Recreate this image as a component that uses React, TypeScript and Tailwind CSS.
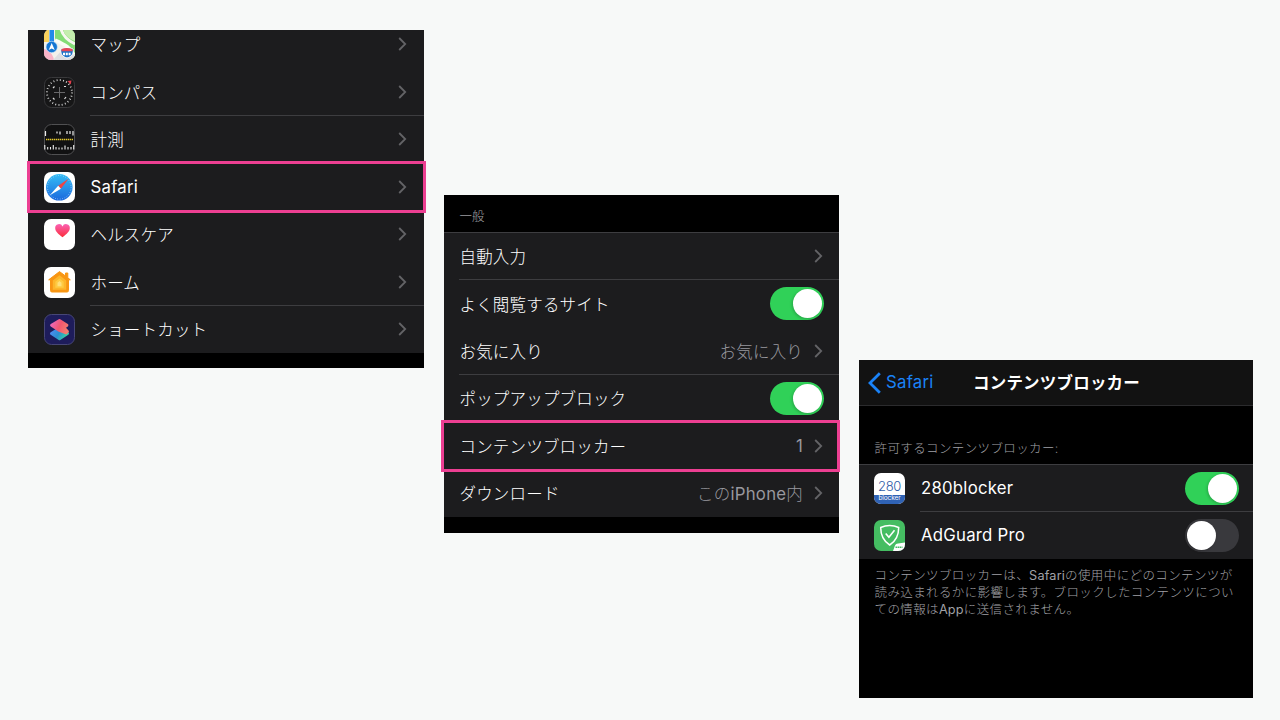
import type { ReactNode } from "react";

const FONT = "font-['Inter','Noto_Sans_CJK_JP',sans-serif]";

function Chevron() {
  return (
    <svg className="h-[14px] w-[9px] shrink-0" viewBox="0 0 9 14" fill="none" stroke="#636366" strokeWidth="1.8">
      <path d="M1.2 1 7.2 7 1.2 13" />
    </svg>
  );
}

function Toggle({ on }: { on: boolean }) {
  return (
    <div
      className={
        on
          ? "flex h-[33px] w-[54px] shrink-0 items-center justify-end rounded-full bg-[#30d158] px-[2px]"
          : "flex h-[33px] w-[54px] shrink-0 items-center justify-start rounded-full bg-[#39393d] px-[2px]"
      }
    >
      <div className="size-[29px] rounded-full bg-white shadow-[-1px_1px_3px_rgba(0,0,0,0.2)]" />
    </div>
  );
}

function Highlight({ className }: { className: string }) {
  return <div className={`pointer-events-none absolute z-10 border-[3px] border-[#ec3f92] ${className}`} />;
}

const ICON = "block size-[31px] shrink-0";

function MapsIcon() {
  return (
    <svg className={ICON} viewBox="0 0 31 31">
      <defs>
        <clipPath id="maps"><rect width="31" height="31" rx="7" /></clipPath>
      </defs>
      <g clipPath="url(#maps)">
        <rect width="31" height="31" fill="#f3f1ea" />
        <path d="M11 0h20v31h-3C27 19 18 15 11 12Z" fill="#83dc76" />
        <path d="M17 0c2 8 8 12 14 15" stroke="#f7f7f0" strokeWidth="3" fill="none" />
        <path d="M19 0h12v12C25 10 20 6 19 0Z" fill="#c4edae" />
        <path d="M11 11c9 4 17 8 20 18" stroke="#fbfbf5" strokeWidth="3.5" fill="none" />
        <path d="M0 13v18h10C9 25 5 21 0 20Z" fill="#f9b4c8" />
        <path d="M0 0h5v13H0Z" fill="#fbd25c" />
        <path d="M9 31 18 21l13 5v5Z" fill="#dedee0" />
        <path d="M5.5 0h4.500v14H5.500z" fill="#2389e8" />
        <circle cx="7.7" cy="18" r="5.7" fill="#1677d2" stroke="#d8ecff" strokeWidth=".6" />
        <path d="m7.7 14 3 7-3-1.600-3 1.600Z" fill="#fff" />
        <path d="M17 20q3-1 6-1t6 1c1 4-1 8-6 9-5-1-7-5-6-9Z" fill="#1d73c8" stroke="#fff" />
        <path d="M17.500 20q5-1.800 11 0v2.300h-11Z" fill="#e54556" />
        <path d="M19 25h8" stroke="#fff" strokeWidth="2.4" strokeDasharray="2 .8" />
      </g>
    </svg>
  );
}

function CompassIcon() {
  return (
    <svg className={ICON} viewBox="0 0 31 31" fill="none">
      <rect x=".5" y=".5" width="30" height="30" rx="7" fill="#161617" stroke="#39393b" />
      <circle cx="15.5" cy="15.5" r="12.5" stroke="#dedede" strokeWidth="1.8" strokeDasharray=".9 2.37" />
      <path d="M15.500 10v11M10 15.500h11" stroke="#68686a" strokeWidth="1" />
      <path d="m9 11 1.500-1.500M20 9.500h2M9 21l1.500 1.500M20.500 22l1.500-2" stroke="#ddd" strokeWidth="1.2" />
      <path d="m23.500 4 4-.5-.8 4Z" fill="#e33d4b" />
    </svg>
  );
}

function MeasureIcon() {
  return (
    <svg className={ICON} viewBox="0 0 31 31" fill="none">
      <rect x=".5" y=".5" width="30" height="30" rx="7" fill="#111112" stroke="#505052" />
      <path d="M1.500 7v5M13 7.500v2M16 7.500v3M23 7v3M26 7v3M29 7v4.500" stroke="#eee" strokeWidth="1.2" />
      <path d="M2 15.500h27" stroke="#e4c82c" strokeWidth="1.3" strokeDasharray="1.4 .6" />
      <path d="M.8 21v4.500M3.700 23v2.500M6.500 23v2.500M9.300 21v4.500M12 23v2.500M15 23.500v2M18 23.500v2M21 21.500v4M24 23v2.500M27 23v2.500M29.700 21v4.500" stroke="#eee" strokeWidth="1.1" />
    </svg>
  );
}

function SafariIcon() {
  return (
    <svg className={ICON} viewBox="0 0 31 31">
      <defs>
        <linearGradient id="saf" x1="0" y1="0" x2="0" y2="1">
          <stop stopColor="#35bdf5" />
          <stop offset="1" stopColor="#1b68dd" />
        </linearGradient>
      </defs>
      <rect width="31" height="31" rx="7" fill="#fff" />
      <circle cx="15.3" cy="15.3" r="13.3" fill="url(#saf)" />
      <circle cx="15.3" cy="15.3" r="11.8" fill="none" stroke="#bfe6ff" strokeWidth="1" strokeDasharray=".6 1.86" />
      <path d="M24.500 6.800 14.200 13.700l2.700 3Z" fill="#f04444" />
      <path d="M5.500 23.600 14.200 13.700l2.700 3Z" fill="#fff" />
    </svg>
  );
}

function HealthIcon() {
  return (
    <svg className={ICON} viewBox="0 0 31 31">
      <defs>
        <linearGradient id="heart" x1="0" y1="0" x2="0" y2="1">
          <stop stopColor="#fb61b4" />
          <stop offset="1" stopColor="#fa2d39" />
        </linearGradient>
      </defs>
      <rect width="31" height="31" rx="7" fill="#fff" />
      <path d="M18.500 18.200C14 14.800 11.200 12.200 11.200 9.200a3.800 3.800 0 0 1 7.300-1.800 3.800 3.800 0 0 1 7.300 1.800c0 3-2.800 5.600-7.300 9Z" fill="url(#heart)" />
    </svg>
  );
}

function HomeIcon() {
  return (
    <svg className={ICON} viewBox="0 0 31 31" strokeLinejoin="round">
      <rect width="31" height="31" rx="7" fill="#fff" />
      <path d="M15.500 4.600 4.700 12.800h1.800v10.700q0 1.500 1.500 1.500h15q1.500 0 1.500-1.500V12.800h1.800l-2.500-2V6h-2.300v3Z" fill="#f89613" stroke="#f89613" strokeWidth="1" />
      <path d="m15.500 8.300-6.700 5.300v9.200h13.400v-9.200Z" fill="#fdb62b" />
      <path d="m15.500 11.500-4.200 3.300v6h8.400v-6Z" fill="#fecb43" />
      <path d="m15.500 14-2 1.700v3.600h4v-3.600Z" fill="#ffe07a" />
    </svg>
  );
}

function ShortcutsIcon() {
  return (
    <svg className={ICON} viewBox="0 0 31 31" strokeLinejoin="round">
      <defs>
        <linearGradient id="sc1" gradientUnits="userSpaceOnUse" x1="8" y1="9" x2="23" y2="16">
          <stop stopColor="#ef67b4" />
          <stop offset=".5" stopColor="#f4566f" />
          <stop offset="1" stopColor="#f47c70" />
        </linearGradient>
        <linearGradient id="sc2" gradientUnits="userSpaceOnUse" x1="8" y1="16" x2="21" y2="24">
          <stop stopColor="#4c8cf0" />
          <stop offset=".5" stopColor="#2b8fd0" />
          <stop offset="1" stopColor="#35cda6" />
        </linearGradient>
      </defs>
      <rect x=".5" y=".5" width="30" height="30" rx="7" fill="#1e1c5b" stroke="#474776" />
      <path d="m15.500 14.500 8 5-8 5.200-8-5.200Z" fill="url(#sc2)" stroke="url(#sc2)" strokeWidth="3" />
      <path d="m15.500 6.500 7.500 4.800-3.200 2.200 3.700 4-1.500 1.500-6.500-2.500-8-5.200Z" fill="url(#sc1)" stroke="url(#sc1)" strokeWidth="2.8" />
    </svg>
  );
}

function BlockerIcon() {
  return (
    <div className="flex size-[31px] shrink-0 flex-col overflow-hidden rounded-[7px] bg-white text-center">
      <div className="h-[22px] pt-px text-[13px] leading-[24px] font-light tracking-[-0.3px] text-[#2e5ca8]">280</div>
      <div className="h-[9px] bg-[#2f62b5] text-[6.5px] leading-[7px] tracking-[-0.1px] text-white">blocker</div>
    </div>
  );
}

function AdGuardIcon() {
  return (
    <svg className={ICON} viewBox="0 0 31 31" fill="none">
      <rect width="31" height="31" rx="7" fill="#45bd62" />
      <path d="M15.700 5.600c3 0 6 .6 9 1.900 0 8-2.200 13.300-9 17.500-6.800-4.200-9-9.500-9-17.500 3-1.300 6-1.900 9-1.900Z" stroke="#fff" strokeWidth="1.500" />
      <path d="m11.700 13.500 3.200 3.800 5.600-7" stroke="#fff" strokeWidth="1.600" />
      <path d="M31 22.500V24q0 7-7 7h-5l2-5.500q.6-2 3-2Z" fill="#fff" />
      <path d="M21.500 27.300h7" stroke="#45bd62" strokeWidth="1.600" strokeDasharray="1.500 .5" />
    </svg>
  );
}

/** Japanese runs use a lighter weight than the Latin ones. */
function Label({ children, className = "" }: { children: string; className?: string }) {
  const runs = children.split(/([A-Za-z0-9 ]+)/).filter(Boolean);
  return (
    <span className={`whitespace-nowrap ${className}`}>
      {runs.map((run, i) => (
        <span key={i} className={/^[A-Za-z0-9]/.test(run) ? "text-[1.015em] font-[380] tracking-[0.015em]" : "font-light"}>
          {run}
        </span>
      ))}
    </span>
  );
}

const BODY = "text-[16.5px] tracking-[0.18px] text-white";
const SMALL = "text-[12.5px] tracking-[0.38px] text-[#a0a0a6]";

function AppRow({ icon, label, h, line, marked }: { icon: ReactNode; label: string; h: string; line?: boolean; marked?: boolean }) {
  return (
    <div className={`relative flex shrink-0 pl-4 ${h}`}>
      <div className="flex w-[46px] items-center">{icon}</div>
      <div className={`flex flex-1 items-center justify-between border-b pr-[17px] pl-[0.5px] ${line ? "border-[#3d3d40]" : "border-transparent"}`}>
        <Label className={`${BODY} pt-[3px]`}>{label}</Label>
        <Chevron />
      </div>
      {marked && <Highlight className="-top-[2px] -right-[2px] -bottom-[2px] -left-px" />}
    </div>
  );
}

function SettingRow({ label, h, line, marked, value, toggle }: { label: string; h: string; line?: boolean; marked?: boolean; value?: string; toggle?: boolean }) {
  return (
    <div className={`relative flex pl-[15px] ${h}`}>
      <div className={`flex flex-1 items-center justify-between border-b pl-[0.5px] ${toggle ? "pr-[15px]" : "pr-4"} ${line ? "border-[#3d3d40]" : "border-transparent"}`}>
        <Label className={`${BODY} pt-[3px]`}>{label}</Label>
        {toggle ? (
          <Toggle on />
        ) : (
          <div className="flex items-center gap-[11px]">
            {value && <Label className="pt-[3px] text-[16.5px] tracking-[0.18px] text-[#98989f]">{value}</Label>}
            <Chevron />
          </div>
        )}
      </div>
      {marked && <Highlight className="-top-[2px] -right-px -bottom-[2px] -left-[3px]" />}
    </div>
  );
}

export default function App() {
  return (
    <main className={`flex h-[720px] w-[1280px] items-start overflow-hidden bg-[#f7f9f8] pl-7 ${FONT}`}>
      <section className="mt-[30px] h-[338px] w-[396px] bg-black">
        <div className="flex flex-col bg-[#1c1c1e]">
          <div className="flex h-[38px] flex-col justify-end overflow-hidden">
            <AppRow icon={<MapsIcon />} label="マップ" h="h-[48px]" />
          </div>
          <AppRow icon={<CompassIcon />} label="コンパス" h="h-[48px]" line />
          <AppRow icon={<MeasureIcon />} label="計測" h="h-[47px]" />
          <AppRow icon={<SafariIcon />} label="Safari" h="h-[48px]" marked />
          <AppRow icon={<HealthIcon />} label="ヘルスケア" h="h-[47px]" />
          <AppRow icon={<HomeIcon />} label="ホーム" h="h-[48px]" line />
          <AppRow icon={<ShortcutsIcon />} label="ショートカット" h="h-[47px]" />
        </div>
      </section>

      <section className="mt-[195px] ml-5 h-[338px] w-[395px] bg-black">
        <div className="flex h-[38px] items-center border-b border-[#3d3d40] pt-[8px] pl-[15.5px]">
          <Label className="text-[12.4px] text-[#a0a0a6]">一般</Label>
        </div>
        <div className="bg-[#1c1c1e]">
          <SettingRow label="自動入力" h="h-[47px]" line />
          <SettingRow label="よく閲覧するサイト" h="h-[48px]" toggle />
          <SettingRow label="お気に入り" h="h-[47px]" value="お気に入り" line />
          <SettingRow label="ポップアップブロック" h="h-[47px]" toggle />
          <SettingRow label="コンテンツブロッカー" h="h-[48px]" value="1" marked />
          <SettingRow label="ダウンロード" h="h-[47px]" value="このiPhone内" />
        </div>
      </section>

      <section className="mt-[360px] ml-5 h-[338px] w-[394px] bg-black">
        <header className="grid h-[46px] grid-cols-[114px_1fr] items-center border-b border-[#2b2b2d] bg-[#121212]">
          <div className="flex items-center gap-[5px] pl-[9px] text-[#1a82f7]">
            <svg className="h-[22px] w-[13px]" viewBox="0 0 13 22" fill="none" stroke="currentColor" strokeWidth="2.800">
              <path d="M11.800 1.200 2 11l9.800 9.800" />
            </svg>
            <Label className="pt-px text-[16.5px]">Safari</Label>
          </div>
          <h1 className="pt-px text-[16.5px] font-bold tracking-[0.2px] whitespace-nowrap text-white">コンテンツブロッカー</h1>
        </header>
        <div className="flex h-[59px] items-end border-b border-[#3d3d40] pb-[5px] pl-[15.5px]">
          <Label className={SMALL}>許可するコンテンツブロッカー:</Label>
        </div>
        <div className="bg-[#1c1c1e]">
          <div className="flex h-[47px] pl-[15px]">
            <div className="flex w-[46px] items-center"><BlockerIcon /></div>
            <div className="flex flex-1 items-center justify-between border-b border-[#3d3d40] pr-[14px] pl-px">
              <Label className={`${BODY} pt-[2px]`}>280blocker</Label>
              <Toggle on />
            </div>
          </div>
          <div className="flex h-[47px] pl-[15px]">
            <div className="flex w-[46px] items-center"><AdGuardIcon /></div>
            <div className="flex flex-1 items-center justify-between pr-[14px] pl-px">
              <Label className={`${BODY} pt-px`}>AdGuard Pro</Label>
              <Toggle on={false} />
            </div>
          </div>
        </div>
        <div className="flex flex-col pt-2 pl-[15.5px] leading-[17px]">
          <Label className={SMALL}>コンテンツブロッカーは、Safariの使用中にどのコンテンツが</Label>
          <Label className={SMALL}>読み込まれるかに影響します。ブロックしたコンテンツについ</Label>
          <Label className={SMALL}>ての情報はAppに送信されません。</Label>
        </div>
      </section>
    </main>
  );
}
